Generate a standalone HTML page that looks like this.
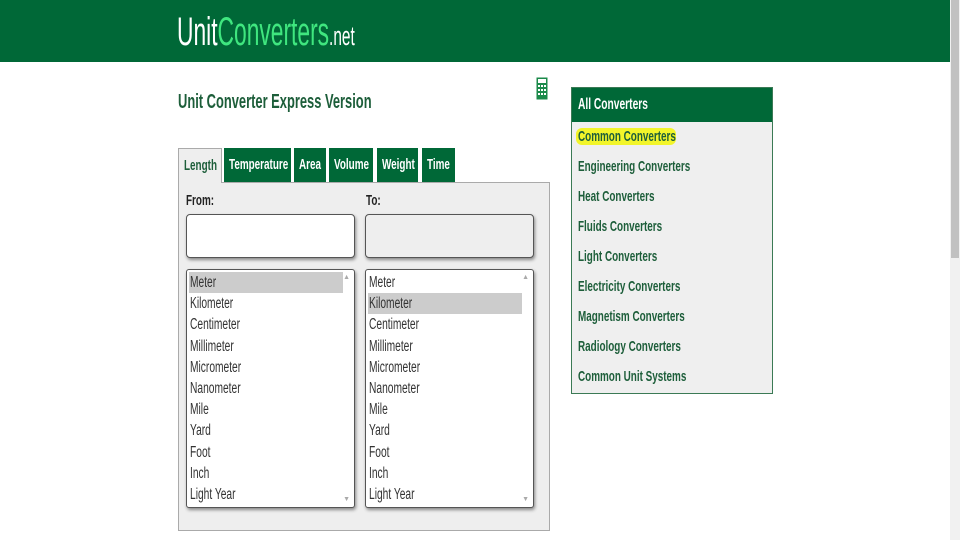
<!DOCTYPE html>
<html><head><style>
*{margin:0;padding:0;box-sizing:border-box}
body{width:960px;height:540px;overflow:hidden;background:#fff;font-family:"Liberation Sans",Arial,sans-serif;position:relative}
.a{position:absolute;white-space:nowrap}
.n{display:inline-block;transform:scaleX(.66);transform-origin:left center}
.hdr{left:0;top:0;width:950px;height:62px;background:#006837}
.sb{left:950px;top:0;width:10px;height:540px;background:#f1f1f1}
.th{left:951px;top:0;width:8px;height:258px;background:#c1c1c1}
.tab{position:absolute;top:148px;height:34px;background:#006837;color:#fff;font-weight:bold;font-size:15px;line-height:34px;padding-left:5px;white-space:nowrap}
.box{position:absolute;border:1px solid #555;border-radius:4px;box-shadow:1px 2px 3px #888}
.lst{position:absolute;border:1px solid #555;border-radius:3px;background:#fff;box-shadow:1px 2px 3px #888;padding:2px 0 0 2px;font-size:15.5px;color:#333}
.lst div{height:21.2px;line-height:21px;padding-left:1px;width:154px}
.sel{background:#ccc}
.arr{position:absolute;right:4px;font-size:7px;color:#aaa}
.side{left:571px;top:87px;width:202px;height:307px;border:1px solid #3b7a55;background:#efefef}
.side .h{height:34px;background:#006837;color:#fff;font-weight:bold;font-size:15.5px;line-height:34px;padding-left:6px}
.side .i{position:absolute;left:6px;font-weight:bold;font-size:15px;color:#1d5e3a}
</style></head><body>
<div class="a hdr"></div>
<div class="a sb"></div><div class="a th"></div>
<div class="a" style="left:177px;top:9px;font-size:40px;line-height:46px;color:#fff"><span class="n" style="transform:scaleX(.57)"><span style="color:#fff">Unit</span><span style="color:#3fe67f">Converters</span><span style="font-size:27px">.net</span></span></div>
<div class="a" style="left:178px;top:91px;font-size:20px;font-weight:bold;color:#1d5e3a"><span class="n" style="transform:scaleX(.645)">Unit Converter Express Version</span></div>
<svg class="a" style="left:536px;top:77px" width="12" height="23" viewBox="0 0 12 23"><rect x="0.5" y="0.5" width="11" height="22" fill="#1b8a4a"/><rect x="2" y="2" width="8" height="4" fill="#fff"/><g fill="#fff"><rect x="2" y="8" width="2" height="2"/><rect x="5" y="8" width="2" height="2"/><rect x="8" y="8" width="2" height="2"/><rect x="2" y="12" width="2" height="2"/><rect x="5" y="12" width="2" height="2"/><rect x="8" y="12" width="2" height="2"/><rect x="2" y="16" width="2" height="2"/><rect x="5" y="16" width="2" height="2"/><rect x="8" y="16" width="2" height="2"/></g></svg>
<div class="a" style="left:178px;top:182px;width:372px;height:349px;background:#eee;border:1px solid #aaa"></div>
<div class="tab" style="left:178px;width:44px;background:#eee;color:#1d5e3a;border:1px solid #aaa;border-bottom:none;height:35px"><span class="n">Length</span></div>
<div class="tab" style="left:224px;width:67px"><span class="n">Temperature</span></div>
<div class="tab" style="left:294px;width:32px"><span class="n">Area</span></div>
<div class="tab" style="left:329px;width:44px"><span class="n">Volume</span></div>
<div class="tab" style="left:377px;width:41px"><span class="n">Weight</span></div>
<div class="tab" style="left:422px;width:33px"><span class="n">Time</span></div>
<div class="a" style="left:186px;top:192px;font-size:15px;font-weight:bold;color:#222"><span class="n">From:</span></div>
<div class="a" style="left:366px;top:192px;font-size:15px;font-weight:bold;color:#222"><span class="n">To:</span></div>
<div class="box" style="left:186px;top:214px;width:169px;height:44px;background:#fff"></div>
<div class="box" style="left:365px;top:214px;width:169px;height:44px;background:#eee"></div>
<div class="lst" style="left:186px;top:269px;width:169px;height:239px"><span class="arr" style="top:4px">▲</span><span class="arr" style="bottom:4px">▼</span>
<div class="sel"><span class="n">Meter</span></div><div><span class="n">Kilometer</span></div><div><span class="n">Centimeter</span></div><div><span class="n">Millimeter</span></div><div><span class="n">Micrometer</span></div><div><span class="n">Nanometer</span></div><div><span class="n">Mile</span></div><div><span class="n">Yard</span></div><div><span class="n">Foot</span></div><div><span class="n">Inch</span></div><div><span class="n">Light Year</span></div></div>
<div class="lst" style="left:365px;top:269px;width:169px;height:239px"><span class="arr" style="top:4px">▲</span><span class="arr" style="bottom:4px">▼</span>
<div><span class="n">Meter</span></div><div class="sel"><span class="n">Kilometer</span></div><div><span class="n">Centimeter</span></div><div><span class="n">Millimeter</span></div><div><span class="n">Micrometer</span></div><div><span class="n">Nanometer</span></div><div><span class="n">Mile</span></div><div><span class="n">Yard</span></div><div><span class="n">Foot</span></div><div><span class="n">Inch</span></div><div><span class="n">Light Year</span></div></div>
<div class="a side"><div class="h"><span class="n">All Converters</span></div>
<div class="i" style="top:40px;background:#f2f52a;border-radius:6px;padding:0 2px;left:4px;width:100px"><span class="n">Common Converters</span></div>
<div class="i" style="top:70px"><span class="n">Engineering Converters</span></div>
<div class="i" style="top:100px"><span class="n">Heat Converters</span></div>
<div class="i" style="top:130px"><span class="n">Fluids Converters</span></div>
<div class="i" style="top:160px"><span class="n">Light Converters</span></div>
<div class="i" style="top:190px"><span class="n">Electricity Converters</span></div>
<div class="i" style="top:220px"><span class="n">Magnetism Converters</span></div>
<div class="i" style="top:250px"><span class="n">Radiology Converters</span></div>
<div class="i" style="top:280px"><span class="n">Common Unit Systems</span></div>
</div>
</body></html>
